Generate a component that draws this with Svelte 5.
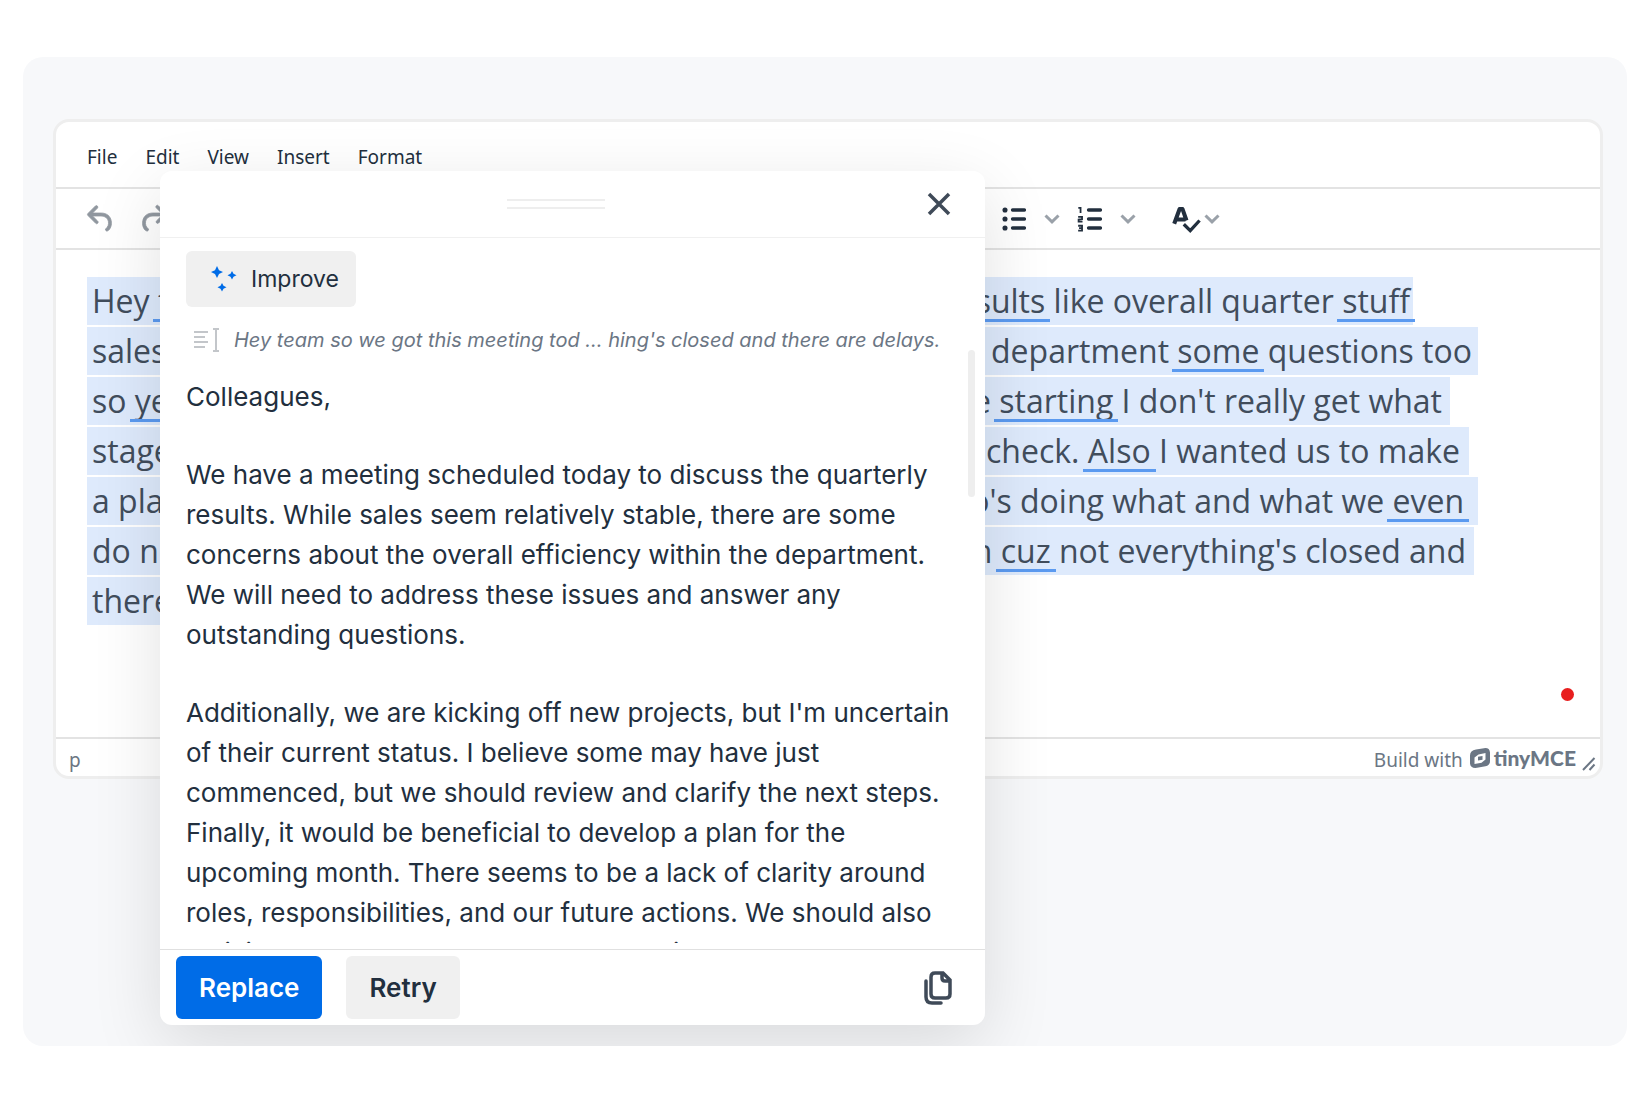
<script>
  const menus = ['File', 'Edit', 'View', 'Insert', 'Format'];

  const lines = [
    { width: 1326, end: 3, left: [['Hey '], ['team', 1]], right: [['results', 1], [' like overall quarter '], ['stuff', 1]] },
    { width: 1391, end: 6, left: [['sales']], right: [['department '], ['some', 1], [' questions too']] },
    { width: 1363, end: 8, left: [['so '], ['yeah', 1]], right: [['are '], ['starting', 1], [" I don't really get what"]] },
    { width: 1382, end: 9, left: [['stage']], right: [['check. '], ['Also', 1], [' I wanted us to make']] },
    { width: 1391, end: 14, left: [['a plan']], right: [["who's doing what and what we "], ['even', 1]] },
    { width: 1387, end: 8, left: [['do next']], right: [['then '], ['cuz', 1], [" not everything's closed and"]] },
    { width: 280, end: 5, left: [['there are delays']], right: [] }
  ];

  const reply = [
    'Colleagues,',
    'We have a meeting scheduled today to discuss the quarterly results. While sales seem relatively stable, there are some concerns about the overall efficiency within the department. We will need to address these issues and answer any outstanding questions.',
    "Additionally, we are kicking off new projects, but I'm uncertain of their current status. I believe some may have just commenced, but we should review and clarify the next steps. Finally, it would be beneficial to develop a plan for the upcoming month. There seems to be a lack of clarity around roles, responsibilities, and our future actions. We should also anticipate some hurdles, as unresolved items may cause delays."
  ];
</script>

{#snippet words(parts)}{#each parts as [text, flagged]}{#if flagged}<span class="flagged">{text}</span>{:else}{text}{/if}{/each}{/snippet}

{#snippet chevron()}
  <svg class="chevron" viewBox="0 0 16 10" aria-hidden="true"><path d="M1.500 1.500 8 7.800l6.500-6.300" /></svg>
{/snippet}

<main class="stage">
  <section class="editor">
    <nav class="menubar">
      {#each menus as menu}<button>{menu}</button>{/each}
    </nav>
    <div class="toolbar">
      <div class="history">
        <button aria-label="Undo"><svg viewBox="0 0 24 24"><path d="M6.400 8H12c3.700 0 6.200 2 6.800 5.100.6 2.700-.4 5.600-2.300 6.800a1 1 0 0 1-1-1.800c1.100-.6 1.800-2.700 1.400-4.600-.5-2.100-2.100-3.500-4.900-3.500H6.400l3.300 3.300a1 1 0 1 1-1.400 1.400l-5-5a1 1 0 0 1 0-1.400l5-5a1 1 0 0 1 1.400 1.400L6.400 8Z" /></svg></button>
        <button aria-label="Redo"><svg viewBox="0 0 24 24"><path d="M17.600 10H12c-2.800 0-4.400 1.400-4.900 3.500-.4 2 .3 4 1.400 4.600a1 1 0 1 1-1 1.800c-2-1.200-2.900-4.100-2.300-6.800.6-3 3-5.100 6.800-5.100h5.600l-3.300-3.300a1 1 0 1 1 1.400-1.400l5 5a1 1 0 0 1 0 1.400l-5 5a1 1 0 0 1-1.400-1.400l3.300-3.300Z" /></svg></button>
      </div>
      <div class="lists">
        <button aria-label="Bullet list">
          <svg viewBox="0 0 24 24"><path class="bar" d="M11 6h8M11 12h8M11 18h8" /><circle cx="6" cy="6" r="1.700" /><circle cx="6" cy="12" r="1.700" /><circle cx="6" cy="18" r="1.700" /></svg>
          {@render chevron()}
        </button>
        <button aria-label="Numbered list">
          <svg viewBox="0 0 24 24"><path class="bar" d="M11 6h8M11 12h8M11 18h8" /><path class="digits" d="M4.200 4.600h1.500V8M4.100 10.600h2.600v1.500l-2.300.3v1.300h2.600M4.100 16.500h2.600v3.300H4.100M4.700 18.100h1.900" /></svg>
          {@render chevron()}
        </button>
      </div>
      <button class="spelling" aria-label="Spellcheck">
        <svg viewBox="0 0 24 24"><path class="letter" d="M4.800 15.200 8.400 5.300h1.900L13 13M6.300 12.300h6" /><path class="tick" d="m11.200 15.500 4.300 4.300 6.200-6.800" /></svg>
        {@render chevron()}
      </button>
    </div>
    <div class="content">
      <div class="selection">
        {#each lines as line}
          <div class="line" style="--line-width: {line.width}px; --line-end: {line.end}px">
            <span>{@render words(line.left)}</span>
            <span>{@render words(line.right)}</span>
          </div>
        {/each}
      </div>
      <i class="alert"></i>
    </div>
    <footer class="status">
      <span>p</span>
      <a class="brand" href="#tinymce">
        <span>Build with</span>
        <svg class="mark" viewBox="0 0 20 20" aria-hidden="true"><path fill-rule="evenodd" d="M6 1.500 14 .2q5.500-.8 6 4.300v8.500q0 4.500-4.500 5.300L7 19.800Q.5 20.600 0 15.500V7.500Q0 2.700 6 1.500ZM8.500 6.400 15.500 5.100V11.500L11.500 14.700 4.500 16V9.500ZM8 8.800l4.500-.8v3.800L8 12.600Z" /></svg>
        <strong>tinyMCE</strong>
      </a>
      <svg class="resize" viewBox="0 0 14 14" aria-hidden="true"><path d="M1 13 12.500 1M7.500 13l5-5.500" /></svg>
    </footer>
  </section>

  <div class="dialog" role="dialog" aria-label="AI assistant">
    <header>
      <span class="grip"></span>
      <button class="close" aria-label="Close"><svg viewBox="0 0 24 24"><path d="M2 2l20 20M22 2 2 22" /></svg></button>
    </header>
    <div class="body">
      <button class="prompt">
        <svg viewBox="0 0 26 26" aria-hidden="true"><path d="M6 0 8 4.200 12 6 8 8 6 12 4 8 0 6l4-1.800ZM21 5l1.500 2.800L25.500 9.300l-3 1.400L21 13.500l-1.500-2.800-3-1.400 3-1.500ZM11 17l1.500 2.800 3 1.500-3 1.400L11 25.500l-1.500-2.800-3-1.400 3-1.500Z" /></svg>
        Improve
      </button>
      <p class="source">
        <svg viewBox="0 0 26 24" aria-hidden="true"><path d="M0 4h14M0 9h11M0 14h14M0 19h11M19 1h6M19 23h6M22 1v22" /></svg>
        <em>Hey team so we got this meeting tod ... hing's closed and there are delays.</em>
      </p>
      <div class="reply">
        {#each reply as paragraph}<p>{paragraph}</p>{/each}
      </div>
      <span class="thumb"></span>
    </div>
    <footer class="actions">
      <button class="primary">Replace</button>
      <button class="secondary">Retry</button>
      <button class="copy" aria-label="Copy"><svg viewBox="0 0 28 34"><path d="M11 2h8l7 7v14q0 4-4 4H11q-4 0-4-4V6q0-4 4-4ZM18 3v4q0 3 3 3h5M2 10v16q0 6 6 6h9" /></svg></button>
    </footer>
  </div>
</main>

<style>
  :global(body) {
    margin: 0;
    background: #fff;
  }
  button {
    display: flex;
    flex: none;
    align-items: center;
    margin: 0;
    padding: 0;
    border: 0;
    background: none;
    color: inherit;
    font: inherit;
  }
  svg {
    display: block;
    flex: none;
    fill: currentColor;
  }
  p {
    margin: 0;
  }
  .stage {
    position: relative;
    box-sizing: border-box;
    margin: 57px 23px 0;
    padding: 62px 24px 267px 30px;
    border-radius: 20px;
    background: #f7f8fa;
    color: #222f3e;
    font-family: 'Noto Sans', sans-serif;
  }
  .editor {
    overflow: hidden;
    border: 3px solid #eee;
    border-radius: 16px;
    background: #fff;
  }
  .menubar {
    display: flex;
    gap: 28px;
    height: 61px;
    padding: 4px 31px 0;
    border-bottom: 2px solid #e3e3e3;
    font-size: 19px;
  }
  .toolbar {
    display: flex;
    height: 59px;
    padding: 0 27px;
    border-bottom: 2px solid #e3e3e3;
  }
  .toolbar svg {
    width: 36px;
    height: 36px;
  }
  .toolbar svg.chevron {
    width: 16px;
    height: 10px;
    fill: none;
    stroke: #9aa1a9;
    stroke-width: 3;
  }
  .history {
    display: flex;
    gap: 16px;
    width: 913px;
    color: #90979f;
  }
  .history svg {
    stroke: currentColor;
    stroke-width: 0.5;
  }
  .lists {
    display: flex;
    gap: 12px;
  }
  .lists button {
    gap: 12px;
  }
  .spelling {
    gap: 1px;
    margin-left: 31px;
  }
  .bar {
    stroke: currentColor;
    stroke-width: 2.200;
    stroke-linecap: round;
  }
  .digits {
    fill: none;
    stroke: currentColor;
    stroke-width: 1.200;
  }
  .letter,
  .tick {
    fill: none;
    stroke: currentColor;
    stroke-linejoin: round;
    stroke-width: 2.700;
  }
  .tick {
    stroke-linejoin: miter;
    stroke-width: 2.200;
  }
  .content {
    position: relative;
    box-sizing: border-box;
    height: 487px;
    padding: 27px 31px;
    color: #414d5c;
    font-family: 'Open Sans', sans-serif;
    font-size: 32px;
  }
  .selection {
    display: grid;
    gap: 2px;
  }
  .line {
    display: flex;
    justify-content: space-between;
    box-sizing: border-box;
    width: var(--line-width);
    height: 48px;
    padding: 0 var(--line-end) 0 5px;
    background: #deeafc;
    line-height: 48px;
    white-space: pre;
  }
  .flagged {
    position: relative;
  }
  .flagged::after {
    position: absolute;
    right: -5px;
    bottom: 0;
    left: -5px;
    height: 3px;
    background: #5b9af0;
    content: '';
  }
  .alert {
    position: absolute;
    right: 26px;
    bottom: 36px;
    width: 13px;
    height: 13px;
    border-radius: 50%;
    background: #e81e1e;
  }
  .status {
    display: flex;
    align-items: center;
    height: 37px;
    padding: 0 4px 0 13px;
    border-top: 2px solid #e3e3e3;
    color: #6b7684;
    font-size: 19px;
  }
  .status span {
    padding-top: 5px;
  }
  .brand {
    display: flex;
    align-items: center;
    margin-left: auto;
    color: inherit;
    text-decoration: none;
  }
  .mark {
    width: 20px;
    height: 20px;
    margin: 0 4px 0 7px;
  }
  .brand strong {
    font-family: Lato, sans-serif;
    font-size: 21px;
    font-weight: 900;
  }
  .resize {
    align-self: flex-end;
    width: 14px;
    height: 14px;
    margin: 0 0 5px 6px;
    fill: none;
    stroke: currentColor;
    stroke-width: 2;
  }
  .dialog {
    position: absolute;
    top: 114px;
    left: 137px;
    width: 825px;
    border-radius: 12px;
    background: #fff;
    box-shadow: 0 20px 70px rgb(0 0 0 / 12%);
    font-family: Inter, sans-serif;
  }
  .dialog header {
    display: flex;
    align-items: center;
    height: 66px;
    padding: 0 34px 0 347px;
    border-bottom: 1px solid #f0f0f0;
  }
  .grip {
    width: 98px;
    height: 6px;
    border: solid #eee;
    border-width: 2px 0;
  }
  .close {
    margin-left: auto;
    color: #3f4a58;
  }
  .close svg {
    width: 24px;
    height: 24px;
    stroke: currentColor;
    stroke-width: 3.500;
  }
  .body {
    position: relative;
    box-sizing: border-box;
    height: 705px;
    margin-bottom: 6px;
    padding: 13px 26px 0;
    overflow: hidden;
  }
  .prompt {
    gap: 14px;
    height: 56px;
    padding: 0 17px 0 25px;
    border-radius: 6px;
    background: #f0f0f0;
    font-size: 23px;
  }
  .prompt svg {
    width: 26px;
    height: 26px;
    color: #006ce7;
  }
  .source {
    display: flex;
    align-items: center;
    gap: 14px;
    height: 66px;
    padding-left: 8px;
    color: #6b7684;
    font-size: 20px;
    white-space: nowrap;
  }
  .source svg {
    width: 26px;
    height: 24px;
    stroke: #c3c6ca;
    stroke-width: 2;
  }
  .reply {
    display: grid;
    gap: 38px;
    margin-top: 4px;
    font-size: 26px;
    line-height: 40px;
  }
  .thumb {
    position: absolute;
    top: 112px;
    right: 10px;
    width: 7px;
    height: 147px;
    border-radius: 4px;
    background: #eee;
  }
  .actions {
    display: flex;
    align-items: center;
    gap: 24px;
    height: 75px;
    padding: 0 33px 0 16px;
    border-top: 1px solid #e0e0e0;
    font-size: 26px;
    font-weight: 600;
  }
  .actions .primary,
  .actions .secondary {
    height: 63px;
    padding: 0 23px;
    border-radius: 6px;
  }
  .actions .primary {
    background: #006ce7;
    color: #fff;
  }
  .actions .secondary {
    background: #f0f0f0;
  }
  .copy {
    margin-left: auto;
    color: #3f4a58;
  }
  .copy svg {
    width: 28px;
    height: 34px;
    fill: none;
    stroke: currentColor;
    stroke-width: 3.500;
    stroke-linecap: round;
  }
</style>
